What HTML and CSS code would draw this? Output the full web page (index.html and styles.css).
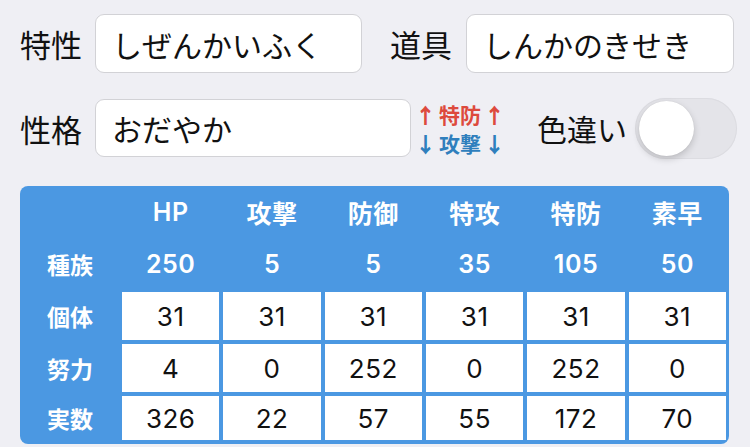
FILE: index.html
```html
<!DOCTYPE html>
<html lang="ja">
<head>
<meta charset="utf-8">
<link rel="stylesheet" href="styles.css">
</head>
<body>
<div class="page">
  <div class="row row1">
    <span class="label">特性</span>
    <div class="field f-ability">しぜんかいふく</div>
    <span class="label label2">道具</span>
    <div class="field f-item">しんかのきせき</div>
  </div>
  <div class="row row2">
    <span class="label">性格</span>
    <div class="field f-nature">おだやか</div>
    <div class="nature-fx">
      <span class="up"><span class="ar">↑</span>特防<span class="ar">↑</span></span>
      <span class="down"><span class="ar">↓</span>攻撃<span class="ar">↓</span></span>
    </div>
    <span class="label shiny">色違い</span>
    <div class="toggle"><div class="knob"></div></div>
  </div>
  <div class="stats">
    <div class="h"></div>
    <div class="h">HP</div><div class="h">攻撃</div><div class="h">防御</div><div class="h">特攻</div><div class="h">特防</div><div class="h">素早</div>
    <div class="h rl">種族</div>
    <div class="h">250</div><div class="h">5</div><div class="h">5</div><div class="h">35</div><div class="h">105</div><div class="h">50</div>
    <div class="h rl">個体</div>
    <div class="c">31</div><div class="c">31</div><div class="c">31</div><div class="c">31</div><div class="c">31</div><div class="c">31</div>
    <div class="h rl">努力</div>
    <div class="c">4</div><div class="c">0</div><div class="c">252</div><div class="c">0</div><div class="c">252</div><div class="c">0</div>
    <div class="h rl">実数</div>
    <div class="c">326</div><div class="c">22</div><div class="c">57</div><div class="c">55</div><div class="c">172</div><div class="c">70</div>
  </div>
</div>
</body>
</html>
```
FILE: styles.css
```css
html, body {
  margin: 0;
  padding: 0;
  background: #efeff4;
}
body {
  font-family: "Inter", "Noto Sans CJK JP", sans-serif;
  color: #111;
  width: 750px;
  height: 447px;
  overflow: hidden;
}
.page {
  padding: 14px 0 0 20px;
}
.row {
  display: flex;
  align-items: center;
}
.row1 {
  height: 59px;
}
.row2 {
  margin-top: 26px;
  height: 58px;
}
.label {
  font-family: "Noto Sans CJK JP", sans-serif;
  font-size: 31px;
  line-height: 1;
  white-space: nowrap;
}
.field {
  box-sizing: border-box;
  height: 59px;
  background: #fff;
  border: 1px solid #d2d2d6;
  border-radius: 9px;
  font-family: "Noto Sans CJK JP", sans-serif;
  font-size: 30px;
  display: flex;
  align-items: center;
  padding-left: 16px;
  white-space: nowrap;
}
.f-ability {
  margin-left: 13px;
  width: 267px;
}
.label2 {
  margin-left: 28px;
}
.f-item {
  margin-left: 14px;
  width: 268px;
}
.f-nature {
  margin-left: 13px;
  width: 316px;
  height: 58px;
}
.nature-fx {
  width: 82px;
  display: flex;
  flex-direction: column;
  align-items: center;
  margin-left: 8px;
  font-family: "Noto Sans CJK JP", sans-serif;
  font-weight: 700;
  font-size: 21px;
  line-height: 29px;
  margin-top: 1px;
  white-space: nowrap;
}
.ar {
  display: inline-block;
  margin: 0 3px;
  font-weight: 900;
}
.up { color: #dd4a3d; }
.down { color: #2f7fbd; }
.shiny {
  margin-left: 36px;
  font-size: 30px;
}
.toggle {
  position: relative;
  margin-left: 8px;
  width: 102px;
  height: 61px;
  border-radius: 31px;
  background: #e4e4e9;
  box-shadow: inset 0 0 0 1px #dcdce1;
}
.knob {
  position: absolute;
  left: 4px;
  top: 3px;
  width: 55px;
  height: 55px;
  border-radius: 50%;
  background: #fff;
  box-shadow: 0 3px 7px rgba(0,0,0,0.18), 0 0 1px rgba(0,0,0,0.12);
}
.stats {
  margin-top: 29px;
  width: 709px;
  box-sizing: border-box;
  padding: 0 3px 4px 0;
  background: #4b98e2;
  border-radius: 8px;
  display: grid;
  grid-template-columns: 98px repeat(6, 1fr);
  grid-template-rows: 49px 49px 48px 48px 44px;
  column-gap: 4px;
  row-gap: 4px;
}
.h, .c {
  display: flex;
  align-items: center;
  justify-content: center;
}
.h {
  color: #fff;
  font-weight: 600;
  font-size: 25px;
  letter-spacing: 0.5px;
}
.stats > .h:nth-child(-n+7) {
  padding-top: 2px;
}
.rl {
  font-family: "Noto Sans CJK JP", sans-serif;
  font-weight: 700;
  font-size: 23px;
  letter-spacing: 0;
  padding-left: 2px;
}
.c {
  background: #fff;
  color: #111;
  font-size: 26px;
  letter-spacing: 0.5px;
}
```
